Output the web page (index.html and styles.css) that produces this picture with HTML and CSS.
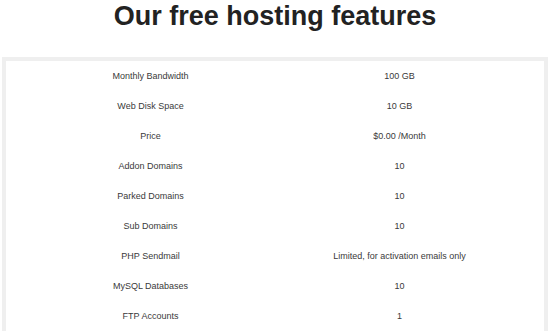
FILE: index.html
```html
<!DOCTYPE html>
<html lang="en">
<head>
    <meta charset="UTF-8">
    <meta name="viewport" content="width=device-width, initial-scale=1.0">
    <title>Free Hosting Features</title>
    <link rel="stylesheet" href="styles.css">
</head>
<body>
    <!-- heading -->
    <h1 class="title">Our free hosting features</h1>

    <!-- feature table -->
    <div class="features-box">
        <table class="features">
            <tr><td>Monthly Bandwidth</td><td>100 GB</td></tr>
            <tr><td>Web Disk Space</td><td>10 GB</td></tr>
            <tr><td>Price</td><td>$0.00 /Month</td></tr>
            <tr><td>Addon Domains</td><td>10</td></tr>
            <tr><td>Parked Domains</td><td>10</td></tr>
            <tr><td>Sub Domains</td><td>10</td></tr>
            <tr><td>PHP Sendmail</td><td>Limited, for activation emails only</td></tr>
            <tr><td>MySQL Databases</td><td>10</td></tr>
            <tr><td>FTP Accounts</td><td>1</td></tr>
        </table>
    </div>
</body>
</html>
```

FILE: styles.css
```css
/* base */
* {
    box-sizing: border-box;
    margin: 0;
    padding: 0;
}

body {
    font-family: "Liberation Sans", Arial, sans-serif;
    background: #fff;
    color: #333;
}

/* heading */
.title {
    font-size: 27px;
    line-height: 32px;
    font-weight: bold;
    text-align: center;
    color: #222;
}

/* feature table */
.features-box {
    margin: 25px 2px 0;
    border: 4px solid #efefef;
    border-bottom: none;
    padding: 0 20px;
}

.features {
    width: 100%;
    border-collapse: collapse;
    table-layout: fixed;
}

.features td {
    height: 30px;
    text-align: center;
    font-size: 9px;
    color: #3a3a3a;
    padding: 0;
}
```
